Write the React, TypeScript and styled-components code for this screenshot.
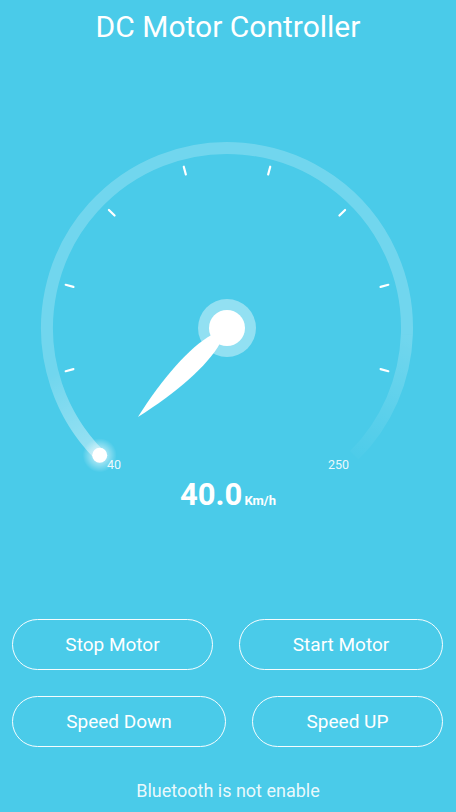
import React from "react";
import styled, { createGlobalStyle } from "styled-components";

const Global = createGlobalStyle`
  html, body { margin: 0; padding: 0; background: #4acbe9; }
  body { font-family: Roboto, "Noto Sans", sans-serif; }
`;

const Screen = styled.div`
  width: 456px;
  height: 812px;
  background: #4acbe9;
  display: flex;
  flex-direction: column;
  align-items: stretch;
  overflow: hidden;
  color: #fff;
`;

const Title = styled.h1`
  margin: 0;
  padding-top: 10px;
  font-size: 30px;
  font-weight: 400;
  line-height: 34px;
  text-align: center;
`;

const GaugeSvg = styled.svg`
  display: block;
  margin-top: 86px;
  width: 456px;
  height: 345px;
`;

const Reading = styled.div`
  display: flex;
  justify-content: center;
  align-items: baseline;
  margin-top: 2px;
  font-weight: 700;
`;

const Value = styled.span`
  font-size: 31px;
  line-height: 36px;
`;

const Unit = styled.span`
  font-size: 13px;
  margin-left: 2px;
`;

const Buttons = styled.div`
  display: flex;
  flex-direction: column;
  gap: 26px;
  margin-top: 106px;
  padding: 0 13px 0 12px;
`;

const Row = styled.div`
  display: flex;
  justify-content: space-between;
`;

const PillButton = styled.button<{ $w: number }>`
  width: ${(p) => p.$w}px;
  height: 51px;
  border: 1.5px solid rgba(255, 255, 255, 0.95);
  border-radius: 26px;
  background: transparent;
  color: #fff;
  font-family: Roboto, "Noto Sans", sans-serif;
  font-size: 19px;
  font-weight: 400;
  padding: 0;
  cursor: pointer;
`;

const Footer = styled.div`
  margin-top: 33px;
  text-align: center;
  font-size: 18px;
  line-height: 22px;
  color: rgba(255, 255, 255, 0.9);
`;

const CX = 227;
const CY = 198;
const R = 180;

function polar(deg: number, r: number) {
  const a = (deg * Math.PI) / 180;
  return { x: CX + r * Math.sin(a), y: CY - r * Math.cos(a) };
}

function arc(from: number, to: number, r: number) {
  const a = polar(from, r);
  const b = polar(to, r);
  const large = to - from > 180 ? 1 : 0;
  return `M ${a.x} ${a.y} A ${r} ${r} 0 ${large} 1 ${b.x} ${b.y}`;
}

const Gauge = () => {
  const start = polar(-135, R);
  const ticks = [-105, -75, -45, -15, 15, 45, 75, 105];
  const tailEnd = polar(-105, R);
  const fadeStart = polar(92, R);
  const fadeEnd = polar(135, R);
  return (
    <GaugeSvg viewBox="0 0 456 345">
      <defs>
        <radialGradient id="glow">
          <stop offset="0%" stopColor="#fff" stopOpacity="0.9" />
          <stop offset="45%" stopColor="#fff" stopOpacity="0.45" />
          <stop offset="100%" stopColor="#fff" stopOpacity="0" />
        </radialGradient>
        <linearGradient
          id="tail"
          gradientUnits="userSpaceOnUse"
          x1={start.x}
          y1={start.y}
          x2={tailEnd.x}
          y2={tailEnd.y}
        >
          <stop offset="0%" stopColor="#fff" stopOpacity="0.3" />
          <stop offset="100%" stopColor="#fff" stopOpacity="0" />
        </linearGradient>
        <linearGradient
          id="fade"
          gradientUnits="userSpaceOnUse"
          x1={fadeStart.x}
          y1={fadeStart.y}
          x2={fadeEnd.x}
          y2={fadeEnd.y}
        >
          <stop offset="0%" stopColor="#fff" stopOpacity="0.22" />
          <stop offset="100%" stopColor="#fff" stopOpacity="0.02" />
        </linearGradient>
      </defs>
      <path d={arc(-135, 92, R)} fill="none" stroke="rgba(255,255,255,0.22)" strokeWidth={12} />
      <path d={arc(92, 135, R)} fill="none" stroke="url(#fade)" strokeWidth={12} />
      <path d={arc(-135, -105, R)} fill="none" stroke="url(#tail)" strokeWidth={12} />
      {ticks.map((t) => {
        const a = polar(t, 159);
        const b = polar(t, 167);
        return (
          <line
            key={t}
            x1={a.x}
            y1={a.y}
            x2={b.x}
            y2={b.y}
            stroke="#fff"
            strokeWidth={2.2}
            strokeLinecap="round"
          />
        );
      })}
      <circle cx={start.x} cy={start.y} r={17} fill="url(#glow)" />
      <circle cx={start.x} cy={start.y} r={7.5} fill="#fff" />
      <text x={107} y={339} fill="rgba(255,255,255,0.9)" fontSize={12.5} fontFamily="Roboto, sans-serif">
        40
      </text>
      <text x={328} y={339} fill="rgba(255,255,255,0.9)" fontSize={12.5} fontFamily="Roboto, sans-serif">
        250
      </text>
      <circle cx={CX} cy={CY} r={29} fill="rgba(255,255,255,0.4)" />
      <g transform={`translate(${CX} ${CY}) rotate(135)`}>
        <path d="M 16 -6 C 40 -13, 82 -10, 126 0 C 82 10, 40 13, 16 6 Z" fill="#fff" />
      </g>
      <circle cx={CX} cy={CY} r={18} fill="#fff" />
    </GaugeSvg>
  );
};

export default function App() {
  return (
    <Screen>
      <Global />
      <Title>DC Motor Controller</Title>
      <Gauge />
      <Reading>
        <Value>40.0</Value>
        <Unit>Km/h</Unit>
      </Reading>
      <Buttons>
        <Row>
          <PillButton $w={201}>Stop Motor</PillButton>
          <PillButton $w={204}>Start Motor</PillButton>
        </Row>
        <Row>
          <PillButton $w={214}>Speed Down</PillButton>
          <PillButton $w={191}>Speed UP</PillButton>
        </Row>
      </Buttons>
      <Footer>Bluetooth is not enable</Footer>
    </Screen>
  );
}
